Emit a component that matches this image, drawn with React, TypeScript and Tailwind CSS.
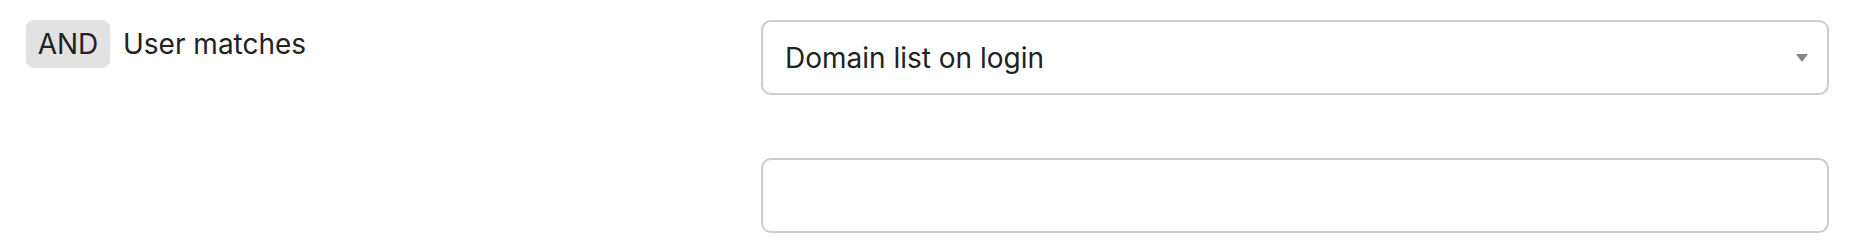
export default function App() {
  return (
    <div className="flex h-[250px] w-full bg-white pl-[26px] pr-[23px] pt-5 font-['Inter',sans-serif] text-[#222]">
      <div className="flex w-[735px] shrink-0 items-start gap-[13px]">
        <span className="flex h-12 w-[84px] items-center justify-center rounded-lg bg-[#e2e2e2] text-[28px] leading-none">
          AND
        </span>
        <span className="flex h-12 items-center text-[28px] leading-none">User matches</span>
      </div>
      <div className="flex flex-1 flex-col gap-[63px]">
        <div className="flex h-[75px] items-center justify-between rounded-[10px] border-2 border-[#cccccc] pl-[22px] pr-[18px]">
          <span className="text-[28px] leading-none">Domain list on login</span>
          <svg width="12" height="8" viewBox="0 0 12 8" className="mr-[1px]">
            <path d="M0 0h12L6 8z" fill="#888" />
          </svg>
        </div>
        <input
          type="text"
          className="h-[75px] rounded-[10px] border-2 border-[#cccccc] px-6 text-[28px] outline-none"
        />
      </div>
    </div>
  );
}
